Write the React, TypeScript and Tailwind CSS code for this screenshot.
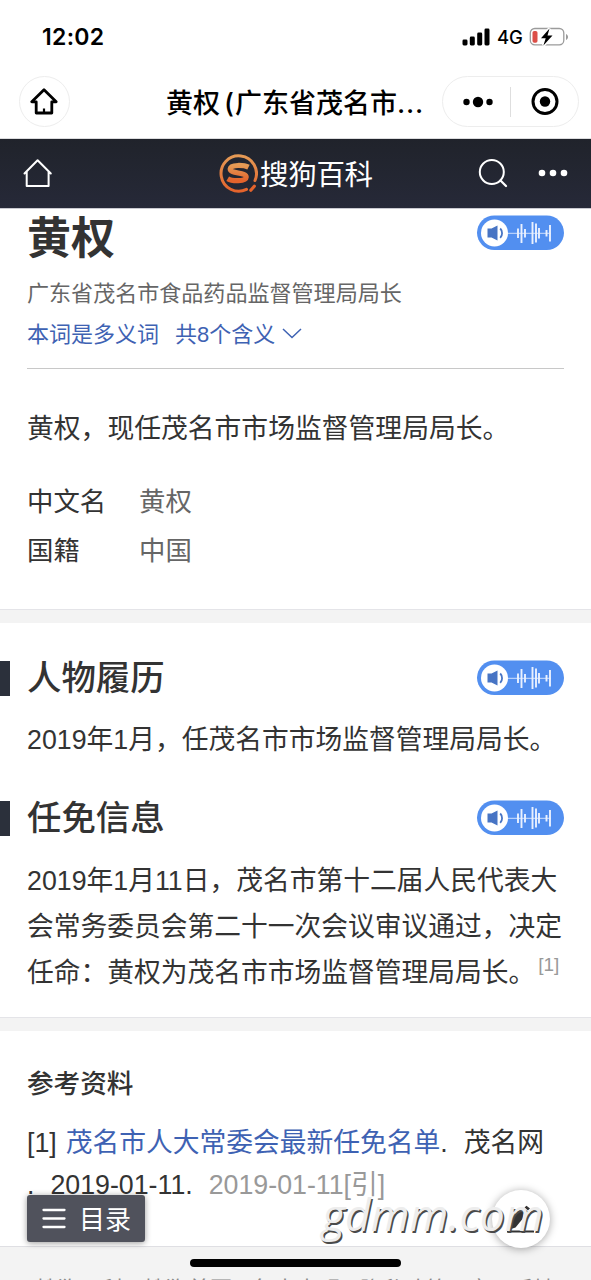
import React from 'react'

const footerLinks = ['搜狗百科', '搜狗首页', '免责声明', '隐私政策', '意见反馈']

const StatusBar: React.FC = () => (
  <div className="h-[72px] flex items-center justify-between pl-[42px] pr-[22px] pt-[2px] text-black">
    <span className="font-['Inter'] font-semibold text-[23px] leading-none tracking-[0.3px]">12:02</span>
    <div className="flex items-center">
      <svg className="w-[28px] h-[18px]" viewBox="0 0 28 18">
        <rect x="0.5" y="11.5" width="5" height="6" rx="1.4" />
        <rect x="7.8" y="8.5" width="5" height="9" rx="1.4" />
        <rect x="15.2" y="4.5" width="5" height="13" rx="1.4" />
        <rect x="22.5" y="0.5" width="5" height="17" rx="1.4" />
      </svg>
      <span className="font-['Inter'] font-medium text-[18.500px] leading-none ml-[7px] w-[26px] tracking-[-0.2px]">4G</span>
      <svg className="w-[40px] h-[20px] ml-[6px]" viewBox="0 0 40 20" fill="none">
        <rect x="1.3" y="1.500" width="33.5" height="16.3" rx="4.5" stroke="#9b9b9b" strokeWidth="1.3" />
        <path d="M37 7v6c1.200-.5 2-1.700 2-3s-.8-2.500-2-3z" fill="#9b9b9b" />
        <rect x="3.500" y="4" width="5" height="11.700" rx="1.800" fill="#dc4f48" />
        <path d="M20.500 1.500l-8.500 9.700h4.700l-2.300 7.300L23.500 8.500h-5z" fill="#000" stroke="#fff" strokeWidth="3" paintOrder="stroke" />
      </svg>
    </div>
  </div>
)

const TitleBar: React.FC = () => (
  <div className="h-[67px] flex items-start pt-[4px] pl-[19px] pr-[12px] border-b border-[#dcdcde]">
    <div className="w-[51px] h-[51px] rounded-full border border-[#ededed] flex items-center justify-center shrink-0">
      <svg className="w-[30px] h-[28px] mr-[2px]" viewBox="0 0 30 28" fill="none" stroke="#000" strokeWidth="2.800">
        <path d="M15 1.800L2.800 13.800h4.400v11.200h15.600V13.800h4.400z" strokeLinejoin="round" />
        <path d="M15 20.500v4.500" strokeWidth="2.200" />
      </svg>
    </div>
    <div className="flex-1 h-[51px] leading-[55px] pl-[96px] text-[27px] font-medium text-black whitespace-nowrap font-['Inter','Noto_Sans_CJK_SC',sans-serif]">
      黄权<span className="ml-[4px] mr-[1px]">(</span>广东省茂名市<span className="tracking-[0.800px]">...</span>
    </div>
    <div className="w-[137px] h-[51px] rounded-full border border-[#ededed] flex items-center shrink-0">
      <svg className="w-[30px] h-[12px] ml-[20px]" viewBox="0 0 30 12">
        <circle cx="3.500" cy="6" r="3.200" />
        <circle cx="15" cy="6" r="5.200" />
        <circle cx="26.500" cy="6" r="3.200" />
      </svg>
      <div className="w-px h-[30px] bg-[#dedede] ml-[17px]" />
      <svg className="w-[28px] h-[28px] ml-[20px]" viewBox="0 0 28 28">
        <circle cx="14" cy="13.500" r="12" fill="none" stroke="#000" strokeWidth="3" />
        <circle cx="14" cy="13.500" r="5.200" />
      </svg>
    </div>
  </div>
)

const SiteHeader: React.FC = () => (
  <header className="h-[70px] flex items-center bg-linear-to-b from-[#20232b] to-[#262938] border-b border-[#c9c9d0] pl-[23px] pr-[23px]">
    <svg className="w-[30px] h-[32px] shrink-0" viewBox="0 0 30 32" fill="none" stroke="#fff" strokeWidth="2">
      <path d="M1.500 15.500L14.600 2.200l13.200 13.300M3.700 13.500V28h21.900V13.500" strokeLinejoin="round" strokeLinecap="round" />
    </svg>
    <div className="flex items-center ml-[165px]">
      <svg className="w-[40px] h-[40px]" viewBox="0 0 40 40" fill="none">
        <defs>
          <linearGradient id="logo" x1="0" y1="0" x2="0" y2="1">
            <stop offset="0" stopColor="#e59a55" />
            <stop offset="1" stopColor="#e4632c" />
          </linearGradient>
        </defs>
        <path d="M28.500 35.400A17.700 17.700 0 1 1 37 26.500" stroke="url(#logo)" strokeWidth="3" strokeLinecap="round" />
        <path d="M36.300 32.200l-3.500 4" stroke="#e4632c" strokeWidth="3.200" strokeLinecap="round" />
        <path d="M30.500 13.200c-4-2-18-3.200-18.300 1.800-.3 4.800 16.300 3.200 16 8.200-.3 4.800-14.500 4-18.500 1.600" stroke="url(#logo)" strokeWidth="5.200" />
      </svg>
      <span className="text-[28.500px] leading-[40px] text-white tracking-[-0.300px] ml-[2px] mt-[2px]">搜狗百科</span>
    </div>
    <svg className="w-[32px] h-[32px] ml-auto -mt-[2px]" viewBox="0 0 32 32" fill="none" stroke="#fff" strokeWidth="2">
      <circle cx="14.800" cy="15" r="12" />
      <path d="M23.500 23.500l5.500 5.500" strokeLinecap="round" strokeWidth="2.300" />
    </svg>
    <svg className="w-[30px] h-[8px] ml-[29px] -mt-[2px]" viewBox="0 0 30 8" fill="#fff">
      <circle cx="4" cy="4" r="3.300" />
      <circle cx="15" cy="4" r="3.300" />
      <circle cx="26" cy="4" r="3.300" />
    </svg>
  </header>
)

const AudioButton: React.FC = () => (
  <svg className="w-[88px] h-[36px] shrink-0" viewBox="0 0 88 36" fill="none">
    <rect x="1" y="0.500" width="87" height="34.500" rx="17.250" fill="#528ff0" />
    <circle cx="18.500" cy="18" r="13.500" fill="#fff" />
    <path d="M11.500 13.500h4l6-3v15l-6-3h-4z" fill="#4774c4" />
    <path d="M24.200 13.500c2.500 2.500 2.500 6.800 0 9.300" stroke="#4774c4" strokeWidth="1.800" />
    <path d="M32 18.300h43" stroke="#b5cffa" strokeWidth="1.200" />
    <path d="M42 13.500v9.500M45.500 9v19M49 14v8.500M56.500 7v22M60 8.500v19M63 13v10.500M70.500 15v6.500M74 10v16.500" stroke="#e8f0fe" strokeWidth="1.900" />
  </svg>
)

const SectionHeading: React.FC<{ title: string }> = ({ title }) => (
  <div className="h-[36px] flex items-center pr-[27px]">
    <div className="w-[10px] h-[35px] bg-[#2b303b]" />
    <h2 className="flex-1 ml-[17px] text-[34.400px] leading-[36px] font-medium">{title}</h2>
    <AudioButton />
  </div>
)

const InfoRow: React.FC<{ label: string; value: string }> = ({ label, value }) => (
  <div className="flex h-[49px] leading-[49px] text-[26.400px]">
    <dt className="w-[112px]">{label}</dt>
    <dd className="text-[#666]">{value}</dd>
  </div>
)

const App: React.FC = () => {
  return (
    <div className="relative w-[591px] h-[1280px] overflow-hidden bg-white text-[#333] font-['Liberation_Sans','Noto_Sans_CJK_SC',sans-serif]">
      <StatusBar />
      <TitleBar />
      <SiteHeader />

      <main>
        <section className="h-[400px] px-[27px]">
          <div className="flex items-start justify-between pt-[6px] h-[60px]">
            <h1 className="text-[44px] leading-[48px] font-bold">黄权</h1>
            <AudioButton />
          </div>
          <p className="mt-[4px] h-[41px] leading-[42px] text-[22.060px] text-[#666]">广东省茂名市食品药品监督管理局局长</p>
          <div className="h-[55px] flex items-start border-b border-[#c8c8c8] text-[22px] leading-[41px] text-[#3e62b3]">
            <span>本词是多义词</span>
            <span className="ml-[16px]">共8个含义</span>
            <svg className="w-[20px] h-[12px] ml-[7px] mt-[14px]" viewBox="0 0 20 12" fill="none" stroke="#3e62b3" strokeWidth="1.500">
              <path d="M1 1l9 8.500L19 1" />
            </svg>
          </div>
          <p className="mt-[37px] h-[46px] leading-[46px] text-[26.800px] whitespace-nowrap">黄权，现任茂名市市场监督管理局局长。</p>
          <dl className="mt-[26px]">
            <InfoRow label="中文名" value="黄权" />
            <InfoRow label="国籍" value="中国" />
          </dl>
        </section>

        <div className="h-[14px] bg-[#f3f3f3] border-t border-[#e4e4e8]" />

        <section className="h-[394px] pt-[37px]">
          <SectionHeading title="人物履历" />
          <p className="mt-[21px] px-[27px] h-[46px] leading-[46px] text-[26.750px] whitespace-nowrap">2019年1月，任茂名市市场监督管理局局长。</p>
          <div className="h-[37px]" />
          <SectionHeading title="任免信息" />
          <p className="mt-[22px] px-[27px] leading-[46px] text-[26.750px] whitespace-nowrap">
            2019年1月11日，茂名市第十二届人民代表大<br />
            会常务委员会第二十一次会议审议通过，决定<br />
            任命：黄权为茂名市市场监督管理局局长。<sup className="text-[19px] leading-none text-[#999] ml-[3px] top-[-11px]">[1]</sup>
          </p>
        </section>

        <div className="h-[14px] bg-[#f3f3f3] border-t border-[#e4e4e8]" />

        <section className="h-[215px] px-[27px] pt-[33px]">
          <h3 className="text-[26.600px] leading-[40px] font-medium">参考资料</h3>
          <p className="mt-[18px] text-[26.750px] leading-[42px] whitespace-nowrap">
            [1]<a className="text-[#3e62b3] ml-[9px]">茂名市人大常委会最新任免名单</a>.<span className="ml-[16px]">茂名网</span><br />
            .<span className="ml-[16px]">2019-01-11.</span><span className="ml-[16px] text-[#999]">2019-01-11[引]</span>
          </p>
        </section>
      </main>

      <footer className="h-[60px] bg-[#f3f3f3] border-t border-[#dfdfe3] flex items-start gap-[20px] pl-[36px] pt-[27px] text-[22px] leading-[32px] text-[#888] whitespace-nowrap">
        {footerLinks.map((label) => (
          <span key={label}>{label}</span>
        ))}
      </footer>

      {/* floating controls */}
      <button className="absolute left-[27px] top-[1195px] w-[118px] h-[47px] rounded-[3px] bg-[#50525c] shadow-[0_1px_6px_rgba(0,0,0,0.4)] flex items-center pl-[15px] text-white text-[26px] leading-[47px]">
        <svg className="w-[24px] h-[22px] mr-[13px]" viewBox="0 0 24 22" stroke="#fff" strokeWidth="2.300" strokeLinecap="round">
          <path d="M1.500 2h21M1.500 10.500h21M1.500 19h21" />
        </svg>
        <span className="pt-[3px]">目录</span>
      </button>

      <div className="absolute left-[492px] top-[1190px] w-[58px] h-[58px] rounded-full bg-white shadow-[0_1px_8px_rgba(0,0,0,0.35)] flex items-center justify-center">
        <svg className="w-[30px] h-[30px]" viewBox="0 0 30 30" fill="#333">
          <path d="M5 25l.5-5L8 13 13.500 6.500 19 5l-2.500 10-7 8.500z" />
          <path d="M18.500 3.500l2-1.800 3.500 2.800-2 2z" />
          <path d="M1 27.500h27" stroke="#333" strokeWidth="2" />
        </svg>
      </div>

      {/* site watermark */}
      <div className="absolute left-[322px] top-[1186px] text-[44.500px] leading-[56px] italic text-[#ededed] whitespace-nowrap [text-shadow:1.5px_1.5px_0.5px_#4a4a4a] font-['Open_Sans',sans-serif]">
        gdmm.com
      </div>

      <div className="absolute left-[190px] top-[1259px] w-[211px] h-[8px] rounded-full bg-black" />
    </div>
  )
}

export default App
